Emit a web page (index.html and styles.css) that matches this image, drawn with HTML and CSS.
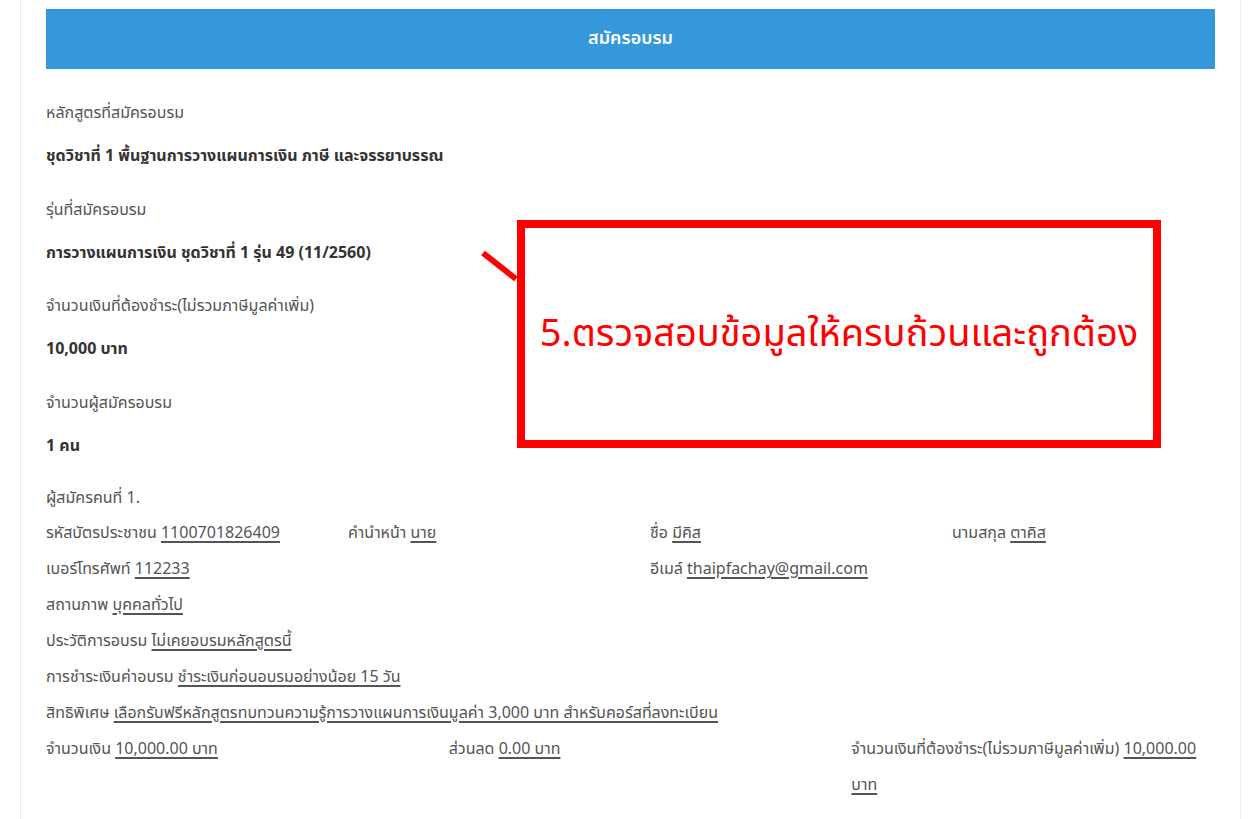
FILE: index.html
```html
<!DOCTYPE html>
<html lang="th">

<head>
    <meta charset="UTF-8">
    <meta name="viewport" content="width=device-width, initial-scale=1.0">
    <title>สมัครอบรม</title>
    <link rel="stylesheet" href="styles.css">
</head>

<body>
    <div class="card">
        <div class="card-title">สมัครอบรม</div>

        <div class="field">
            <p class="label">หลักสูตรที่สมัครอบรม</p>
            <p class="value">ชุดวิชาที่ 1 พื้นฐานการวางแผนการเงิน ภาษี และจรรยาบรรณ</p>
        </div>
        <div class="field">
            <p class="label">รุ่นที่สมัครอบรม</p>
            <p class="value">การวางแผนการเงิน ชุดวิชาที่ 1 รุ่น 49 (11/2560)</p>
        </div>
        <div class="field">
            <p class="label">จำนวนเงินที่ต้องชำระ(ไม่รวมภาษีมูลค่าเพิ่ม)</p>
            <p class="value">10,000 บาท</p>
        </div>
        <div class="field">
            <p class="label">จำนวนผู้สมัครอบรม</p>
            <p class="value">1 คน</p>
        </div>

        <div class="person">
            <div class="line person-no">ผู้สมัครคนที่ 1.</div>
            <div class="row row-4">
                <div>รหัสบัตรประชาชน <u>1100701826409</u></div>
                <div>คำนำหน้า <u>นาย</u></div>
                <div>ชื่อ <u>มีคิส</u></div>
                <div>นามสกุล <u>ตาคิส</u></div>
            </div>
            <div class="row row-4">
                <div class="span-2">เบอร์โทรศัพท์ <u>112233</u></div>
                <div class="span-2">อีเมล์ <u>thaipfachay@gmail.com</u></div>
            </div>
            <div class="line">สถานภาพ <u>บุคคลทั่วไป</u></div>
            <div class="line">ประวัติการอบรม <u>ไม่เคยอบรมหลักสูตรนี้</u></div>
            <div class="line">การชำระเงินค่าอบรม <u>ชำระเงินก่อนอบรมอย่างน้อย 15 วัน</u></div>
            <div class="line">สิทธิพิเศษ <u>เลือกรับฟรีหลักสูตรทบทวนความรู้การวางแผนการเงินมูลค่า 3,000 บาท สำหรับคอร์สที่ลงทะเบียน</u></div>
            <div class="row row-3">
                <div>จำนวนเงิน <u>10,000.00 บาท</u></div>
                <div>ส่วนลด <u>0.00 บาท</u></div>
                <div>จำนวนเงินที่ต้องชำระ(ไม่รวมภาษีมูลค่าเพิ่ม) <u>10,000.00</u> <u>บาท</u></div>
            </div>
        </div>
    </div>

    <!-- annotation over the page -->
    <svg class="pointer" width="44" height="36" viewBox="0 0 44 36">
        <line x1="5" y1="5" x2="38" y2="31" stroke="#ff0000" stroke-width="6" />
    </svg>
    <div class="note">5.ตรวจสอบข้อมูลให้ครบถ้วนและถูกต้อง</div>
</body>

</html>
```

FILE: styles.css
```css
body {
    margin: 0;
    background-color: #fff;
    font-family: "Noto Sans Thai", "Noto Sans", sans-serif;
    font-size: 16px;
    color: #555;
}

.card {
    margin: 0 7px 0 20px;
    padding: 9px 25px 30px 25px;
    border-left: 1px solid #ebebeb;
    border-right: 1px solid #ebebeb;
    min-height: 819px;
    box-sizing: border-box;
}

.card-title {
    background-color: #3498db;
    color: white;
    height: 60px;
    line-height: 60px;
    text-align: center;
    font-size: 18px;
    font-weight: 600;
    margin-bottom: 32px;
}

.field {
    margin-bottom: 29.5px;
}

.field p {
    margin: 0;
    line-height: 24px;
}

.field .value {
    margin-top: 19px;
    font-weight: bold;
    color: #333;
}

.person {
    margin-top: -6px;
    line-height: 36px;
}

.person .person-no {
    line-height: 34px;
}

.row {
    display: grid;
    margin: 0 -15px;
}

.row > div {
    padding: 0 15px;
}

.row-4 {
    grid-template-columns: repeat(4, 1fr);
    width: 1208px;
}

.row-4 .span-2 {
    grid-column: span 2;
}

.row-3 {
    grid-template-columns: repeat(3, 1fr);
    width: 1208px;
}

u {
    text-decoration-thickness: 2px;
    text-underline-offset: 3px;
    color: #555;
}

.pointer {
    position: absolute;
    left: 478px;
    top: 248px;
}

.note {
    position: absolute;
    left: 517px;
    top: 220px;
    width: 644px;
    height: 228px;
    box-sizing: border-box;
    border: 8px solid #ff0000;
    background-color: white;
    color: #ff0000;
    font-size: 38px;
    display: flex;
    align-items: center;
    justify-content: center;
}
```
